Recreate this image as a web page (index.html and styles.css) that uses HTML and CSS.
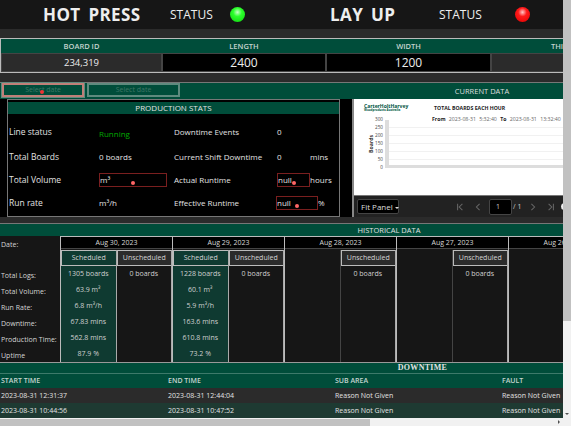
FILE: index.html
```html
<!DOCTYPE html>
<html lang="en">

<head>
    <meta charset="UTF-8">
    <meta name="viewport" content="width=device-width, initial-scale=1.0">
    <title>Press Dashboard</title>
    <link rel="stylesheet" href="styles.css">
</head>

<body>
    <div class="page">
        <div class="main">
            <header class="topbar">
                <div class="line-head">
                    <span class="line-name">HOT PRESS</span>
                    <span class="line-status">STATUS</span>
                    <span class="lamp lamp-green"></span>
                </div>
                <div class="line-head line-head-right">
                    <span class="line-name">LAY UP</span>
                    <span class="line-status">STATUS</span>
                    <span class="lamp lamp-red"></span>
                </div>
            </header>

            <section class="board">
                <div class="board-col">
                    <div class="board-label">BOARD ID</div>
                    <div class="board-value board-value-sm">234,319</div>
                </div>
                <div class="board-col">
                    <div class="board-label">LENGTH</div>
                    <div class="board-value board-value-dark">2400</div>
                </div>
                <div class="board-col">
                    <div class="board-label">WIDTH</div>
                    <div class="board-value board-value-dark">1200</div>
                </div>
                <div class="board-col">
                    <div class="board-label">THICKNESS</div>
                    <div class="board-value"></div>
                </div>
            </section>

            <section class="current">
                <div class="current-bar">
                    <div class="date-inputs">
                        <div class="date-input date-input-error">Select date<i class="dot dot-date"></i></div>
                        <div class="date-input">Select date</div>
                    </div>
                    <div class="current-title">CURRENT DATA</div>
                </div>
                <div class="current-body">
                    <div class="stats">
                        <div class="stats-title">PRODUCTION STATS</div>
                        <div class="stats-grid">
                            <div class="stat-a">Line status</div>
                            <div class="running">Running</div>
                            <div class="stat-b">Downtime Events</div>
                            <div>0</div>
                            <div></div>

                            <div class="stat-a">Total Boards</div>
                            <div>0 boards</div>
                            <div class="stat-b">Current Shift Downtime</div>
                            <div>0</div>
                            <div>mins</div>

                            <div class="stat-a">Total Volume</div>
                            <div><span class="bad bad-wide">m³<i class="dot"></i></span></div>
                            <div class="stat-b">Actual Runtime</div>
                            <div><span class="bad bad-short">null<i class="dot"></i></span></div>
                            <div>hours</div>

                            <div class="stat-a">Run rate</div>
                            <div>m³/h</div>
                            <div class="stat-b">Effective Runtime</div>
                            <div><span class="bad bad-mid">null<i class="dot"></i></span></div>
                            <div class="percent">%</div>
                        </div>
                    </div>
                    <div class="report">
                        <div class="report-page">
                            <div class="report-logo">
                                <div>CarterHoltHarvey</div>
                                <div class="report-logo-sub">Woodproducts Australia</div>
                            </div>
                            <div class="report-heading">TOTAL BOARDS EACH HOUR</div>
                            <div class="plot-title">Boards</div>
                            <div class="plot-ticks">
                                <span>300</span><span>250</span><span>200</span><span>150</span><span>100</span><span>50</span><span>0</span>
                            </div>
                            <div class="plot-area"></div>
                            <div class="report-range"><b>From</b> 2023-08-31 5:32:40 <b>To</b> 2023-08-31 13:32:40</div>
                        </div>
                        <div class="report-tools">
                            <span class="fit">Fit Panel <i class="caret"></i></span>
                            <span class="pager">
                                <svg class="pg" viewBox="0 0 10 10"><path d="M2 1v8M8 1 4 5l4 4"/></svg>
                                <svg class="pg" viewBox="0 0 10 10"><path d="M7 1 3 5l4 4"/></svg>
                                <span class="pg-input">1</span>
                                <span class="pg-total">/ 1</span>
                                <svg class="pg" viewBox="0 0 10 10"><path d="m3 1 4 4-4 4"/></svg>
                                <svg class="pg" viewBox="0 0 10 10"><path d="M8 1v8M2 1l4 4-4 4"/></svg>
                                <i class="knob"></i>
                            </span>
                        </div>
                    </div>
                </div>
            </section>

            <section class="history">
                <div class="history-title">HISTORICAL DATA</div>
                <div class="history-table">
                    <div class="row-names">
                        <div class="row-date">Date:</div>
                        <div>Total Logs:</div>
                        <div>Total Volume:</div>
                        <div>Run Rate:</div>
                        <div>Downtime:</div>
                        <div>Production Time:</div>
                        <div>Uptime</div>
                    </div>

                    <div class="day">
                        <div class="day-date">Aug 30, 2023</div>
                        <div class="day-cols">
                            <div class="shift shift-on">
                                <div class="shift-head">Scheduled</div>
                                <div>1305 boards</div>
                                <div>63.9 m³</div>
                                <div>6.8 m³/h</div>
                                <div>67.83 mins</div>
                                <div>562.8 mins</div>
                                <div>87.9 %</div>
                            </div>
                            <div class="shift">
                                <div class="shift-head">Unscheduled</div>
                                <div>0 boards</div>
                            </div>
                        </div>
                    </div>

                    <div class="day">
                        <div class="day-date">Aug 29, 2023</div>
                        <div class="day-cols">
                            <div class="shift shift-on">
                                <div class="shift-head">Scheduled</div>
                                <div>1228 boards</div>
                                <div>60.1 m³</div>
                                <div>5.9 m³/h</div>
                                <div>163.6 mins</div>
                                <div>610.8 mins</div>
                                <div>73.2 %</div>
                            </div>
                            <div class="shift">
                                <div class="shift-head">Unscheduled</div>
                                <div>0 boards</div>
                            </div>
                        </div>
                    </div>

                    <div class="day">
                        <div class="day-date">Aug 28, 2023</div>
                        <div class="day-cols">
                            <div class="shift shift-empty"></div>
                            <div class="shift">
                                <div class="shift-head">Unscheduled</div>
                                <div>0 boards</div>
                            </div>
                        </div>
                    </div>

                    <div class="day">
                        <div class="day-date">Aug 27, 2023</div>
                        <div class="day-cols">
                            <div class="shift shift-empty"></div>
                            <div class="shift">
                                <div class="shift-head">Unscheduled</div>
                                <div>0 boards</div>
                            </div>
                        </div>
                    </div>

                    <div class="day">
                        <div class="day-date">Aug 26, 2023</div>
                        <div class="day-cols">
                            <div class="shift shift-empty"></div>
                            <div class="shift shift-empty"></div>
                        </div>
                    </div>
                </div>
            </section>

            <section class="downtime">
                <div class="downtime-title">DOWNTIME</div>
                <div class="dt-row dt-head">
                    <div>START TIME</div><div>END TIME</div><div>SUB AREA</div><div>FAULT</div>
                </div>
                <div class="dt-row dt-odd">
                    <div>2023-08-31 12:31:37</div><div>2023-08-31 12:44:04</div><div>Reason Not Given</div><div>Reason Not Given</div>
                </div>
                <div class="dt-row dt-even">
                    <div>2023-08-31 10:44:56</div><div>2023-08-31 10:47:52</div><div>Reason Not Given</div><div>Reason Not Given</div>
                </div>
            </section>
        </div>

        <div class="vscroll">
            <div class="vthumb"></div>
            <i class="arrow-down"></i>
        </div>
        <div class="hscroll">
            <div class="hthumb"></div>
            <i class="arrow-right"></i>
        </div>
    </div>
</body>

</html>
```

FILE: styles.css
```css
* {
    box-sizing: border-box;
}
html, body {
    margin: 0;
    height: 100%;
    overflow: hidden;
}
body {
    font-family: "Open Sans", "Noto Sans", sans-serif;
    font-size: 8px;
    color: #e2e2e2;
    background: #f1f1f1;
}
i {
    font-style: normal;
}
.page {
    display: grid;
    grid-template-columns: 563px 8px;
    grid-template-rows: 418px 8px;
    width: 571px;
    height: 426px;
}
.main {
    overflow: hidden;
    background: #2b2b2b;
}

/* top bar */
.topbar {
    display: flex;
    height: 29px;
    background: #161616;
    color: #eee;
}
.line-head {
    display: flex;
    align-items: center;
    width: 330px;
    padding-left: 43px;
}
.line-head-right {
    width: 233px;
    padding-left: 0;
}
.line-name {
    width: 127px;
    font-size: 17px;
    font-weight: 700;
    word-spacing: 3px;
    letter-spacing: 0.4px;
    white-space: nowrap;
}
.line-head-right .line-name {
    width: 109px;
}
.line-status {
    width: 60px;
    font-size: 12px;
}
.line-head-right .line-status {
    width: 76px;
}
.lamp {
    width: 15px;
    height: 15px;
    border-radius: 50%;
}
.lamp-green {
    background: radial-gradient(circle at 50% 35%, #c8ffc8, #2bff2b 35%, #0fcf0f);
}
.lamp-red {
    background: radial-gradient(circle at 50% 35%, #ffc8c8, #ff1a1a 35%, #e00000);
}

/* board strip */
.board {
    display: flex;
    width: 660px;
    height: 35px;
    margin-top: 9px;
    border: 1px solid #bbb;
    border-right: 0;
}
.board-col {
    flex: 0 0 164px;
}
.board-col:first-child {
    flex-basis: 161px;
}
.board-col:nth-child(3) {
    flex-basis: 165px;
}
.board-col:last-child {
    flex-basis: 160px;
}
.board-label {
    height: 14px;
    background: #004d3a;
    font-size: 7.5px;
    font-weight: 600;
    line-height: 14px;
    text-align: center;
    color: #c4d4cf;
}
.board-value {
    height: 19px;
    border: 1px solid #444;
    background: #2b2b2b;
    color: #eee;
    font-size: 12px;
    line-height: 17px;
    text-align: center;
}
.board-value-sm {
    font-size: 9.5px;
}
.board-value-dark {
    background: #000;
}

/* current data */
.current {
    height: 140px;
    margin-top: 9px;
    border-top: 1px solid #777;
}
.current-bar {
    display: flex;
    height: 16px;
    background: #004d3a;
}
.date-inputs {
    display: flex;
    width: 401px;
    padding-left: 2px;
}
.date-input {
    position: relative;
    width: 93px;
    height: 14px;
    border: 2px solid #5f8a7e;
    background: #004d3a;
    color: #3f7666;
    font-size: 7px;
    line-height: 10px;
    text-align: center;
}
.date-input-error {
    width: 82px;
    margin-right: 3px;
    border-color: #c07f78;
    outline: 1px solid #5f8a7e;
}
.current-title {
    flex: 1;
    color: #ddd;
    font-size: 7.5px;
    font-weight: 500;
    line-height: 16px;
    text-align: center;
}
.current-body {
    display: flex;
    height: 118px;
    background: #000;
}
.stats {
    width: 333px;
    height: 118px;
    margin-left: 7px;
    border: 1px solid #777;
}
.stats-title {
    height: 12px;
    margin-top: 2px;
    background: #004d3a;
    color: #e2e2e2;
    font-size: 8px;
    line-height: 12px;
    text-align: center;
}
.stats-grid {
    display: grid;
    grid-template-columns: 90px 75px 103px 33px 30px;
    grid-template-rows: 28px 23px 23px 23px;
    padding: 3px 0 0 1px;
    align-items: center;
}
.stat-a {
    font-size: 8.5px;
    white-space: nowrap;
}
.running {
    padding-top: 5px;
    color: #0a0;
}
.percent {
    padding-left: 8px;
}
.bad {
    position: relative;
    display: block;
    height: 14px;
    border: 1px solid #7a1f1f;
    line-height: 11px;
}
.bad-wide {
    width: 68px;
}
.bad-short {
    width: 33px;
}
.bad-mid {
    width: 42px;
    margin-left: -1px;
}
.dot {
    position: absolute;
    right: 31px;
    top: 7px;
    width: 4px;
    height: 4px;
    border-radius: 50%;
    background: #f66;
}
.bad-short .dot {
    right: 13px;
}
.bad-mid .dot {
    right: 18px;
}
.dot-date {
    right: 38px;
    top: 5px;
    background: #e33;
}

/* report viewer */
.report {
    flex: 1;
    min-width: 0;
    margin-left: 12px;
    display: flex;
    flex-direction: column;
    border-left: 2px solid #888;
    overflow: hidden;
}
.report-page {
    position: relative;
    height: 96px;
    flex: none;
    background: #fff;
    color: #333;
}
.report-logo {
    position: absolute;
    left: 10px;
    top: 5px;
    color: #00543f;
    font-size: 5px;
    font-weight: 700;
    line-height: 5px;
}
.report-logo-sub {
    font-size: 3px;
    line-height: 3px;
}
.report-heading {
    position: absolute;
    left: 80px;
    top: 5px;
    color: #222;
    font-size: 5.2px;
    font-weight: 700;
    white-space: nowrap;
}
.report-range {
    position: absolute;
    left: 78px;
    top: 16px;
    color: #666;
    font-size: 5.2px;
    white-space: nowrap;
    word-spacing: 2px;
}
.report-range b {
    color: #222;
}
.plot-title {
    position: absolute;
    left: 13px;
    top: 54px;
    color: #333;
    font-size: 5.2px;
    font-weight: 700;
    transform: rotate(-90deg);
    transform-origin: left top;
}
.plot-ticks {
    position: absolute;
    left: 19px;
    top: 18px;
    width: 10px;
    height: 53px;
    display: flex;
    flex-direction: column;
    justify-content: space-between;
    color: #444;
    font-size: 4.6px;
    line-height: 5px;
    text-align: right;
}
.plot-area {
    position: absolute;
    left: 31px;
    top: 21px;
    right: 0;
    height: 48px;
    border-left: 4px solid #ddd;
    border-bottom: 3px solid #ddd;
    background: repeating-linear-gradient(#fff 0 7px, #f1f1f1 7px 8px);
}
.report-tools {
    display: flex;
    align-items: center;
    flex: 1;
    background: #222;
    border-top: 1px solid #777;
    padding-left: 3px;
}
.fit {
    flex: none;
    width: 42px;
    height: 15px;
    padding-left: 3px;
    border: 1px solid #444;
    border-radius: 2px;
    background: #000;
    color: #ddd;
    font-size: 8px;
    line-height: 13px;
    white-space: nowrap;
}
.caret {
    display: inline-block;
    border: 2.5px solid transparent;
    border-top-color: #ddd;
    border-bottom: 0;
    vertical-align: middle;
}
.pager {
    display: flex;
    align-items: center;
    flex: none;
    gap: 10px;
    margin-left: 57px;
    color: #ccc;
}
.pg {
    flex: none;
    width: 8px;
    height: 8px;
    fill: none;
    stroke: #666;
    stroke-width: 1.3;
}
.pg-input {
    flex: none;
    width: 23px;
    height: 16px;
    margin: 0 -9px 0 -3px;
    padding-left: 6px;
    border: 1px solid #444;
    border-radius: 2px;
    background: #000;
    font-size: 7px;
    line-height: 14px;
}
.pg-total {
    margin-right: -2px;
    font-size: 7px;
    white-space: nowrap;
}
.knob {
    flex: none;
    width: 7px;
    height: 7px;
    margin-left: -4px;
    border-radius: 50%;
    background: #eee;
}

/* historical data */
.history {
    height: 140px;
    margin-top: 1px;
    border-top: 1px solid #777;
}
.history-title {
    width: 778px;
    height: 12px;
    background: #004d3a;
    color: #e2e2e2;
    font-size: 7.5px;
    line-height: 12px;
    text-align: center;
}
.history-table {
    display: flex;
    width: 778px;
    height: 127px;
    background: #161616;
    border-bottom: 1px solid #999;
}
.row-names {
    flex: 0 0 60px;
    padding-left: 1px;
    color: #d5d5d5;
    font-size: 7px;
    white-space: nowrap;
}
.row-names div {
    height: 16px;
    line-height: 16px;
}
.row-names .row-date {
    height: 32px;
    padding-top: 1px;
}
.day {
    flex: 0 0 112px;
    border-left: 1px solid #bbb;
}
.day-date {
    height: 13px;
    margin-bottom: 1px;
    background: #000;
    border-top: 1px solid #bbb;
    border-bottom: 1px solid #444;
    color: #d5d5d5;
    font-size: 7px;
    line-height: 11px;
    text-align: center;
}
.day-cols {
    display: flex;
    height: 112px;
}
.shift {
    flex: 1;
    border-right: 1px solid #aaa;
    text-align: center;
    color: #d0d0d0;
    font-size: 7px;
}
.shift > div {
    height: 16px;
    line-height: 14px;
}
.shift > .shift-head {
    height: 16px;
    margin-bottom: 1px;
    border: 1px solid #bbb;
    border-right: 0;
    background: #2b2b2b;
    color: #d5d5d5;
    line-height: 14px;
}
.shift-on {
    background: #0f3a31;
}
.shift-on > .shift-head {
    background: #0f3a31;
}
.shift-empty {
    border-right-color: #444;
}

/* downtime table */
.downtime {
    width: 845px;
    background: #004d3a;
}
.downtime-title {
    height: 11px;
    border-bottom: 1px solid #3d7a6a;
    color: #e2e2e2;
    font-family: "Liberation Serif", serif;
    font-size: 8px;
    font-weight: 700;
    letter-spacing: 0.3px;
    line-height: 10px;
    text-align: center;
}
.dt-row {
    display: grid;
    grid-template-columns: 167px 167px 167px 167px;
    height: 15px;
    padding-left: 1px;
    font-size: 7px;
    line-height: 15px;
    color: #e2e2e2;
}
.dt-head {
    height: 14px;
    line-height: 14px;
    font-weight: 600;
    color: #c4d4cf;
}
.dt-odd {
    background: #2b2b2b;
}
.dt-even {
    background: #1e3a32;
}

/* scrollbars */
.vscroll {
    display: flex;
    flex-direction: column;
    align-items: center;
    justify-content: space-between;
    padding-bottom: 3px;
    background: #f1f1f1;
}
.vthumb {
    width: 100%;
    height: 321px;
    background: #c1c1c1;
}
.arrow-down {
    border: 2.5px solid transparent;
    border-top-color: #505050;
    border-bottom: 0;
}
.hscroll {
    grid-column: 1 / 3;
    display: flex;
    align-items: center;
    justify-content: space-between;
    padding-right: 11px;
    background: #f1f1f1;
}
.hthumb {
    width: 370px;
    height: 7px;
    background: #c1c1c1;
}
.arrow-right {
    border: 2.5px solid transparent;
    border-left-color: #505050;
    border-right: 0;
}
```
